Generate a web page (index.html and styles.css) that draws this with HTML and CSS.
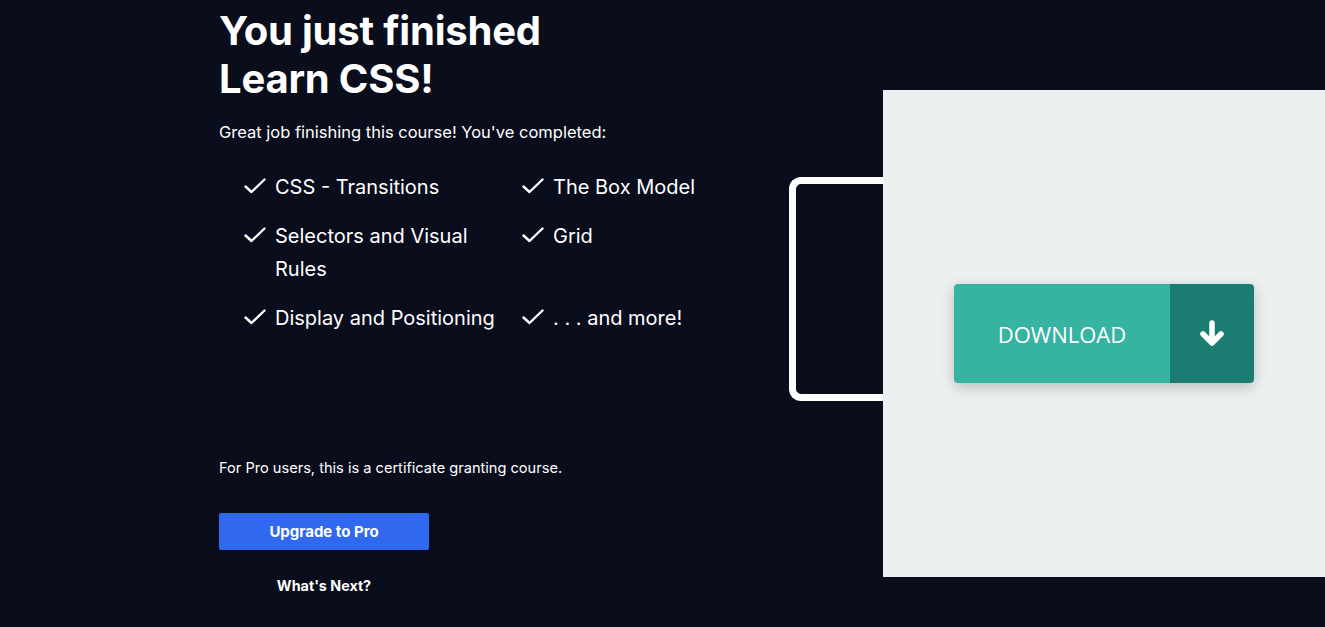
FILE: index.html
```html
<!DOCTYPE html>
<html>
<head>
<meta charset="utf-8">
<link rel="stylesheet" href="styles.css">
</head>
<body>
<div class="page">
  <section class="info">
    <h1 class="title">You just finished<br>Learn CSS!</h1>
    <p class="lead">Great job finishing this course! You've completed:</p>
    <ul class="checklist">
      <li><span class="check"><svg viewBox="0 0 22 16" width="22" height="16"><path d="M1.5 8.5 L7.5 14 L20.5 1.5" fill="none" stroke="#fff" stroke-width="2.4" stroke-linecap="round" stroke-linejoin="round"/></svg></span><span>CSS - Transitions</span></li>
      <li><span class="check"><svg viewBox="0 0 22 16" width="22" height="16"><path d="M1.5 8.5 L7.5 14 L20.5 1.5" fill="none" stroke="#fff" stroke-width="2.4" stroke-linecap="round" stroke-linejoin="round"/></svg></span><span>The Box Model</span></li>
      <li><span class="check"><svg viewBox="0 0 22 16" width="22" height="16"><path d="M1.5 8.5 L7.5 14 L20.5 1.5" fill="none" stroke="#fff" stroke-width="2.4" stroke-linecap="round" stroke-linejoin="round"/></svg></span><span>Selectors and Visual Rules</span></li>
      <li><span class="check"><svg viewBox="0 0 22 16" width="22" height="16"><path d="M1.5 8.5 L7.5 14 L20.5 1.5" fill="none" stroke="#fff" stroke-width="2.4" stroke-linecap="round" stroke-linejoin="round"/></svg></span><span>Grid</span></li>
      <li><span class="check"><svg viewBox="0 0 22 16" width="22" height="16"><path d="M1.5 8.5 L7.5 14 L20.5 1.5" fill="none" stroke="#fff" stroke-width="2.4" stroke-linecap="round" stroke-linejoin="round"/></svg></span><span>Display and Positioning</span></li>
      <li><span class="check"><svg viewBox="0 0 22 16" width="22" height="16"><path d="M1.5 8.5 L7.5 14 L20.5 1.5" fill="none" stroke="#fff" stroke-width="2.4" stroke-linecap="round" stroke-linejoin="round"/></svg></span><span>. . . and more!</span></li>
    </ul>
    <p class="pro-note">For Pro users, this is a certificate granting course.</p>
    <div class="actions">
      <a class="upgrade" href="#">Upgrade to Pro</a>
      <a class="next" href="#">What's Next?</a>
    </div>
  </section>
  <section class="cert">
    <div class="frame"></div>
    <div class="panel">
      <a class="download" href="#">
        <span class="dl-label">DOWNLOAD</span>
        <span class="dl-icon"><svg viewBox="0 0 26 27" width="26" height="27"><path d="M13 3 V22 M4 14 L13 23 L22 14" fill="none" stroke="#fff" stroke-width="5.5" stroke-linecap="round" stroke-linejoin="round"/></svg></span>
      </a>
    </div>
  </section>
</div>
</body>
</html>
```
FILE: styles.css
```css
html, body {
  margin: 0;
  padding: 0;
  background: #0a0d1c;
  height: 100%;
  overflow: hidden;
}
body {
  font-family: "Inter", "Noto Sans", sans-serif;
  color: #ffffff;
}
.page {
  display: flex;
  align-items: flex-start;
  width: 1325px;
  height: 627px;
}
.info {
  width: 500px;
  padding-left: 219px;
  flex-shrink: 0;
}
.title {
  margin: 7px 0 0 0;
  font-size: 40px;
  line-height: 48px;
  font-weight: 700;
  letter-spacing: -0.2px;
}
.lead {
  margin: 18px 0 0 0;
  font-size: 16.5px;
  line-height: 22px;
}
.checklist {
  list-style: none;
  margin: 28px 0 0 25px;
  padding: 0;
  display: grid;
  grid-template-columns: 278px 200px;
  row-gap: 16px;
  font-size: 20px;
  line-height: 33px;
}
.checklist li {
  display: flex;
  align-items: flex-start;
}
.check {
  width: 31px;
  flex-shrink: 0;
  display: flex;
  padding-top: 7px;
}
.pro-note {
  margin: 123px 0 0 0;
  font-size: 14.6px;
  line-height: 20px;
}
.actions {
  width: 210px;
  display: flex;
  flex-direction: column;
  align-items: stretch;
  margin-top: 35px;
}
.upgrade {
  display: flex;
  justify-content: center;
  align-items: center;
  height: 37px;
  background: #3068ef;
  color: #fff;
  border-radius: 2px;
  font-size: 15px;
  font-weight: 700;
  text-decoration: none;
}
.next {
  margin-top: 27px;
  text-align: center;
  color: #fff;
  font-size: 14.3px;
  font-weight: 700;
  text-decoration: none;
}
.cert {
  display: flex;
  align-items: flex-start;
  margin-left: 70px;
}
.frame {
  margin-top: 177px;
  width: 87px;
  height: 210px;
  border: 7px solid #ffffff;
  border-right: none;
  border-radius: 12px 0 0 12px;
}
.panel {
  margin-top: 90px;
  width: 442px;
  height: 487px;
  background: #ecf0f1;
  display: flex;
  align-items: center;
  justify-content: center;
}
.download {
  display: flex;
  width: 300px;
  height: 99px;
  border-radius: 4px;
  overflow: hidden;
  text-decoration: none;
  box-shadow: 0 4px 14px rgba(0, 0, 0, 0.22);
}
.dl-label {
  flex: 1;
  display: flex;
  align-items: center;
  justify-content: center;
  background: #36b3a1;
  color: #ffffff;
  font-family: "Open Sans", "Noto Sans", sans-serif;
  font-size: 22px;
}
.dl-icon {
  width: 84px;
  display: flex;
  align-items: center;
  justify-content: center;
  background: #1b7c71;
}
```
